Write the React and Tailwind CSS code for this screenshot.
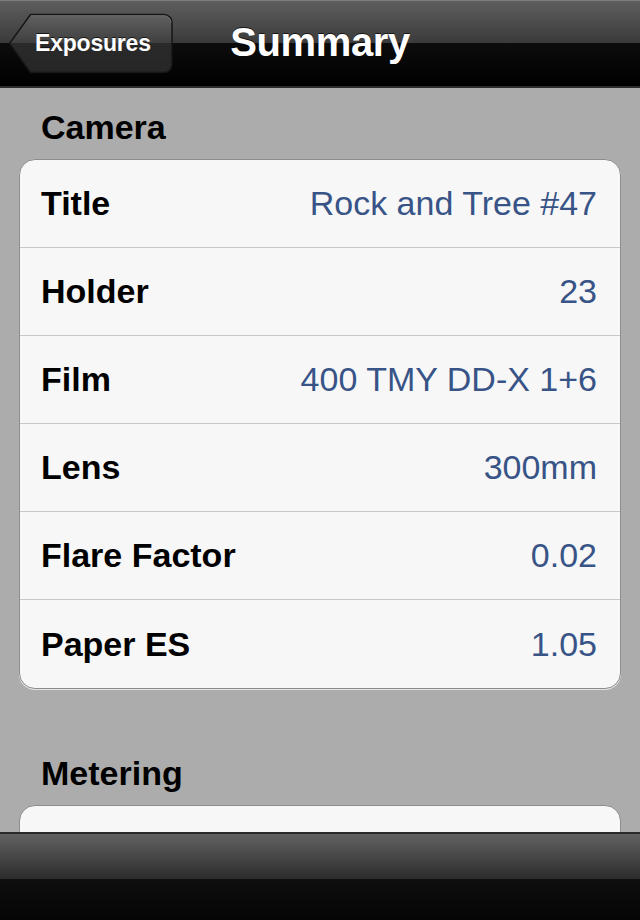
const camera = [
  ['Title', 'Rock and Tree #47'],
  ['Holder', '23'],
  ['Film', '400 TMY DD-X 1+6'],
  ['Lens', '300mm'],
  ['Flare Factor', '0.02'],
  ['Paper ES', '1.05'],
];

const font = { fontFamily: '"Liberation Sans", Arial, sans-serif' };

// glossy back arrow button, drawn as a shape under its label
const BackButton = ({ label }) => (
  <button className="relative ml-[8px] flex h-[61px] w-[166px] items-center pl-[27px]">
    <svg className="absolute inset-0" width="166" height="61" viewBox="0 0 166 61">
      <defs>
        <linearGradient id="backFill" x1="0" y1="0" x2="0" y2="1">
          <stop offset="0" stopColor="#616161" />
          <stop offset="0.5" stopColor="#3e3e3e" />
          <stop offset="0.5" stopColor="#2a2a2a" />
          <stop offset="1" stopColor="#262626" />
        </linearGradient>
      </defs>
      <path
        d="M22.5 1.5 H156 a8 8 0 0 1 8 8 V51.5 a8 8 0 0 1 -8 8 H22.5 L1.5 30.5 Z"
        fill="url(#backFill)"
        stroke="#161616"
        strokeWidth="1.5"
      />
      <path d="M23 2.8 H156 a7 7 0 0 1 7 7" fill="none" stroke="#7a7a7a" strokeWidth="1" opacity="0.6" />
    </svg>
    <span className="relative text-[23px] font-bold tracking-[-0.2px] text-white [text-shadow:0_-1px_0_rgba(0,0,0,0.7)]">
      {label}
    </span>
  </button>
);

const Header = ({ children }) => (
  <div className="px-[41px] text-[34px] font-bold leading-[40px] text-black">
    {children}
  </div>
);

export default function App() {
  return (
    <div className="flex h-[920px] w-[640px] flex-col overflow-hidden bg-[#acacac]" style={font}>
      <div className="grid h-[88px] shrink-0 grid-cols-[1fr_auto_1fr] items-center border-t border-b-2 border-t-[#7d7d7d] border-b-[#2c2c2c] bg-[linear-gradient(#5e5e5e,#3a3a3a_50%,#0c0c0c_50%,#000)]">
        <div className="flex">
          <BackButton label="Exposures" />
        </div>
        <div className="mb-[4px] text-[40px] font-bold tracking-[-0.4px] text-white [text-shadow:0_-1px_0_rgba(0,0,0,0.7)]">
          Summary
        </div>
        <div />
      </div>

      <div className="flex-1 overflow-hidden pt-[19px]">
        <Header>Camera</Header>
        <div className="mx-[19px] mt-[12px] overflow-hidden rounded-[16px] border border-[#8c8c8c] bg-[#f7f7f7] shadow-[0_1px_0_#e4e4e4]">
          {camera.map(([label, value], i) => (
            <div
              key={label}
              className={`flex h-[88px] items-center justify-between pl-[21px] pr-[23px] ${
                i < camera.length - 1 ? 'border-b border-[#c9c9c9]' : 'h-[87px]'
              }`}
            >
              <span className="text-[34px] font-bold text-black">{label}</span>
              <span className="text-[34px] text-[#385487]">{value}</span>
            </div>
          ))}
        </div>

        <div className="mt-[64px]">
          <Header>Metering</Header>
        </div>
        <div className="mx-[19px] mt-[12px] h-[88px] rounded-[16px] border border-[#8c8c8c] bg-[#f7f7f7]" />
      </div>

      <div className="h-[88px] shrink-0 border-t-2 border-[#2a2a2a] bg-[linear-gradient(#626262,#2c2c2c_52%,#0e0e0e_52%,#050505)]" />
    </div>
  );
}
